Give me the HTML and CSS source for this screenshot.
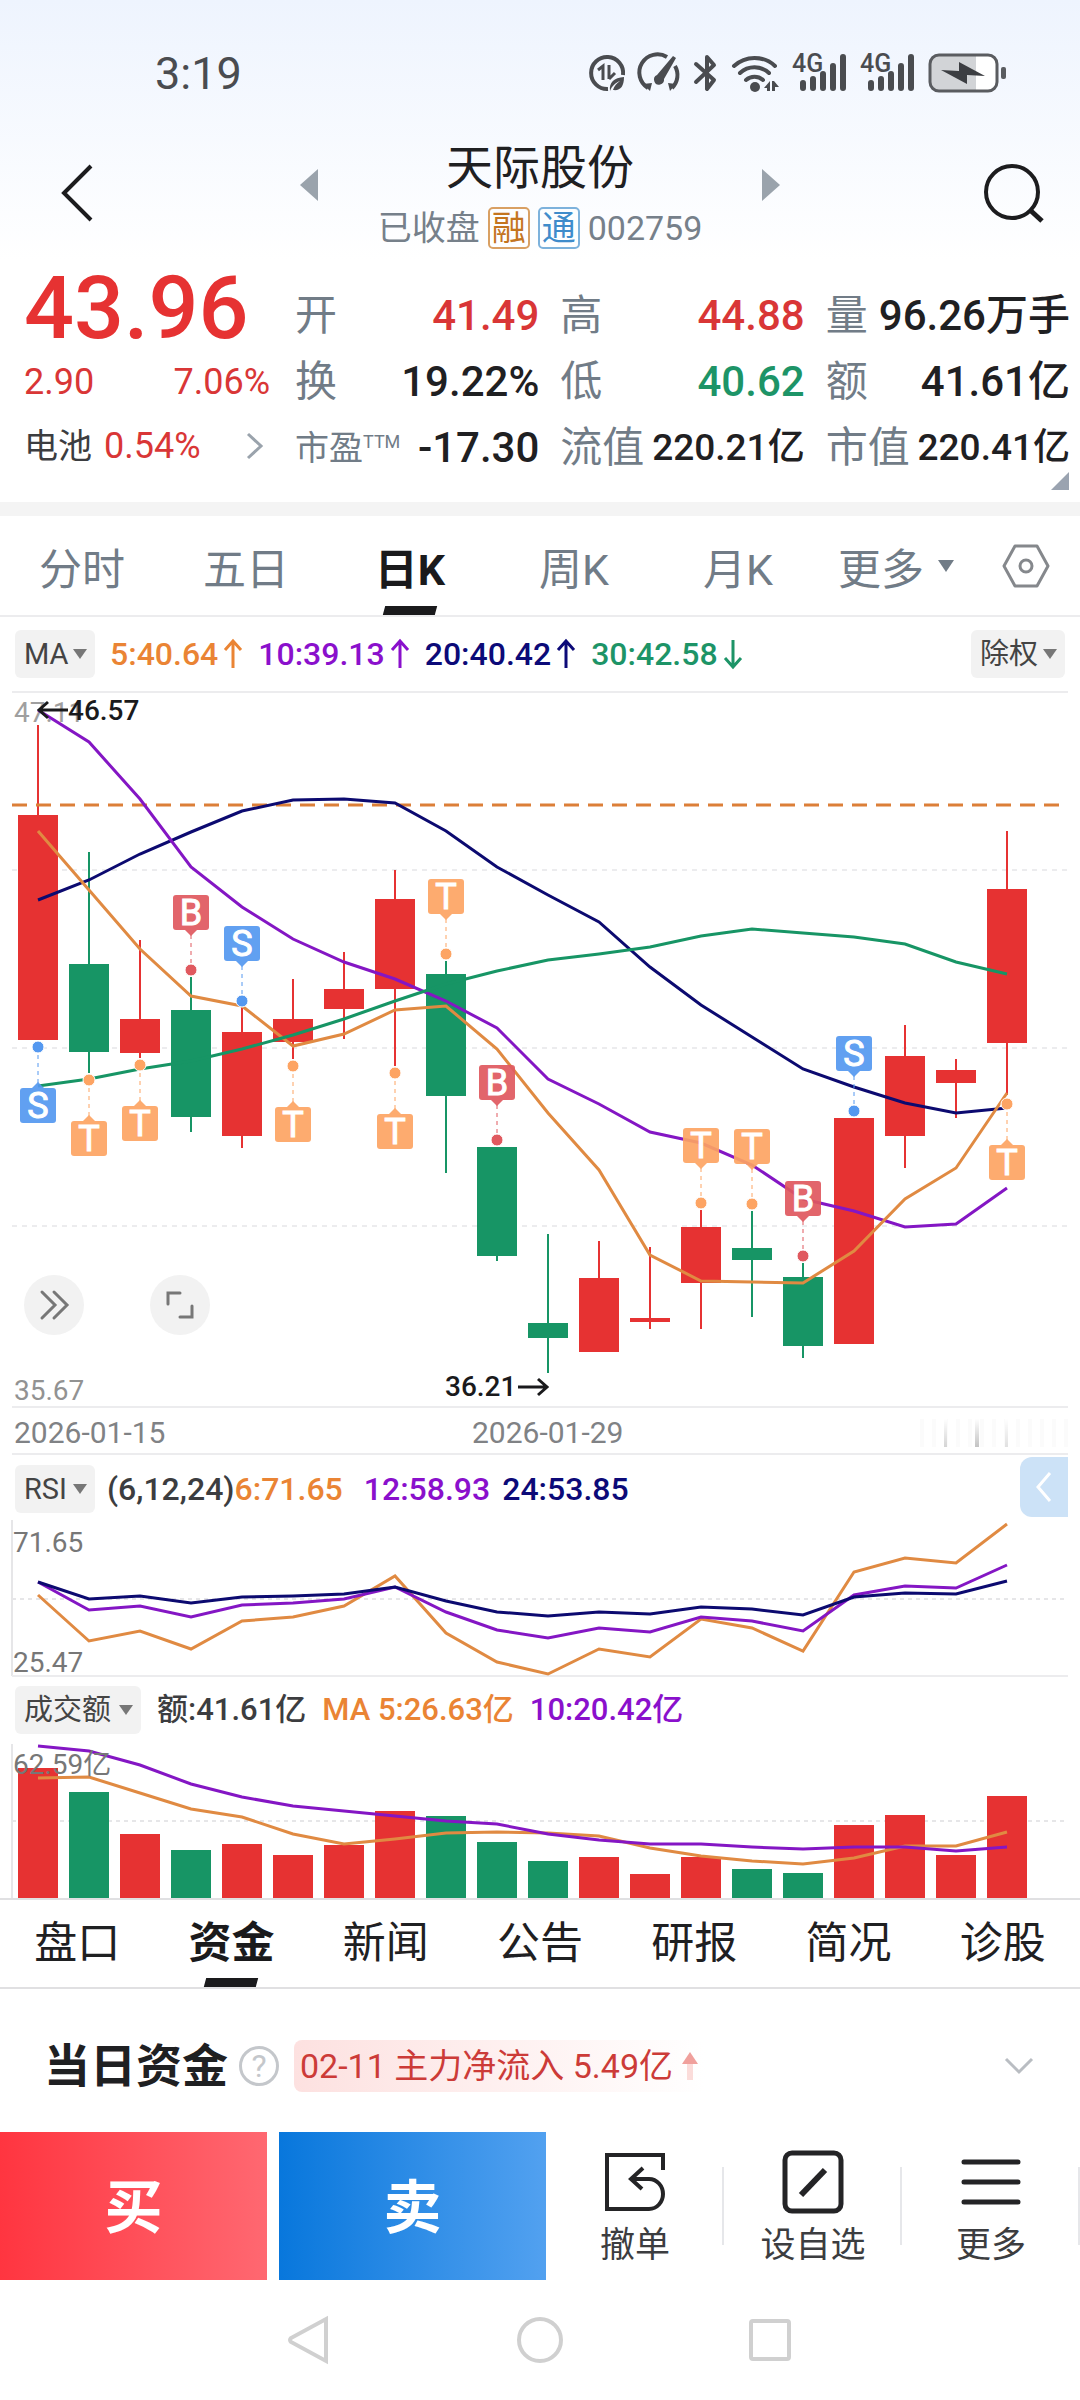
FILE: index.html
```html
<!DOCTYPE html>
<html lang="zh-CN">
<head>
    <meta charset="UTF-8">
    <meta name="viewport" content="width=device-width, initial-scale=1.0">
    <title>天际股份 002759</title>
    <link rel="stylesheet" href="styles.css">
</head>
<body>
    <div class="page">
        <div class="status-bar">
            <span class="clock">3:19</span>
            <div class="status-icons">
                <svg width="38" height="40" viewBox="0 0 38 40">
                    <path d="M35 22A16 16 0 1 0 20 36" fill="none" stroke="#4a4c50" stroke-width="4"/>
                    <path d="M10 17l5-4v14M21 12v14M21 26l6-6" fill="none" stroke="#4a4c50" stroke-width="3"/>
                    <path d="M22 38c-1-9 4-13 14-14 0 10-4 14-11 13 1-4 4-7 7-9-5 2-8 5-10 10z" fill="#4a4c50"/>
                </svg>
                <svg width="42" height="40" viewBox="0 0 42 40">
                    <path d="M9 35A18 18 0 0 1 28 4M36 13A18 18 0 0 1 33 35" fill="none" stroke="#4a4c50" stroke-width="4"/>
                    <path d="M4 31l9-1-2 8zM29 30l8 1-6 7z" fill="#4a4c50"/>
                    <path d="M37 5L25 26a5 5 0 1 1-7-4L34 3z" fill="#4a4c50"/>
                </svg>
                <svg width="24" height="40" viewBox="0 0 24 40">
                    <path d="M2 11l18 16-7 9V4l7 8L2 29" fill="none" stroke="#4a4c50" stroke-width="4" stroke-linejoin="round" stroke-linecap="round"/>
                </svg>
                <svg width="48" height="40" viewBox="0 0 48 40">
                    <path d="M3 13a30 30 0 0 1 41 0M9 20a21 21 0 0 1 29 0M15 27a13 13 0 0 1 17 0" fill="none" stroke="#4a4c50" stroke-width="4" stroke-linecap="round"/>
                    <circle cx="24" cy="34" r="5" fill="#4a4c50"/>
                    <path d="M33 35l6-7v10h-3v-3zM41 28l2 0 5 6h-4v4h-3z" fill="#4a4c50"/>
                </svg>
                <svg class="signal" width="55" height="40" viewBox="0 0 55 40">
                    <text x="0" y="19">4G</text>
                    <path d="M11 30v5M21 26v9M31 21v14M41 13v22M51 4v31" fill="none" stroke="#4a4c50" stroke-width="6" stroke-linecap="round"/>
                </svg>
                <svg class="signal" width="55" height="40" viewBox="0 0 55 40">
                    <text x="0" y="19">4G</text>
                    <path d="M11 30v5M21 26v9M31 21v14M41 13v22M51 4v31" fill="none" stroke="#4a4c50" stroke-width="6" stroke-linecap="round"/>
                </svg>
                <svg width="78" height="40" viewBox="0 0 78 40">
                    <rect x="1" y="1" width="68" height="38" rx="10" fill="#fff"/>
                    <path d="M11 2h37v36H11a9 9 0 0 1-9-9V11a9 9 0 0 1 9-9z" fill="#d2d4d7"/>
                    <rect x="2" y="2" width="67" height="36" rx="9" fill="none" stroke="#5a5c60" stroke-width="3"/>
                    <path d="M13 17l18 1V9l26 14-18-1v9z" fill="#3c3e42"/>
                    <rect x="73" y="14" width="5" height="12" rx="2" fill="#5a5c60"/>
                </svg>
            </div>
        </div>

        <header class="title-bar">
            <button class="icon-button back" aria-label="返回">
                <svg width="34" height="60" viewBox="0 0 34 60"><path d="M31 3L4 30l27 27" fill="none" stroke="#1c1c1e" stroke-width="4"/></svg>
            </button>
            <button class="icon-button prev" aria-label="上一只">
                <svg width="18" height="32" viewBox="0 0 18 32"><path d="M18 0v32L0 16z" fill="#9aa3ac"/></svg>
            </button>
            <div class="stock-name">
                <h1>天际股份</h1>
                <p>已收盘<span class="tag margin">融</span><span class="tag connect">通</span>002759</p>
            </div>
            <button class="icon-button next" aria-label="下一只">
                <svg width="18" height="32" viewBox="0 0 18 32"><path d="M0 0v32l18-16z" fill="#9aa3ac"/></svg>
            </button>
            <button class="icon-button search" aria-label="搜索">
                <svg width="62" height="62" viewBox="0 0 62 62"><circle cx="28" cy="30" r="26" fill="none" stroke="#1c1c1e" stroke-width="4"/><path d="M46 48l12 11" stroke="#1c1c1e" stroke-width="5"/></svg>
            </button>
        </header>

        <section class="quote">
            <div class="quote-main">
                <div class="price">43.96</div>
                <div class="change"><span>2.90</span><span>7.06%</span></div>
                <a class="sector" href="#sector">电池<b>0.54%</b>
                    <svg width="18" height="26" viewBox="0 0 18 26"><path d="M2 1l13 12L2 25" fill="none" stroke="#9aa3ac" stroke-width="3"/></svg>
                </a>
            </div>
            <dl class="stats">
                <div><dt>开</dt><dd class="up">41.49</dd></div>
                <div><dt>高</dt><dd class="up">44.88</dd></div>
                <div><dt>量</dt><dd>96.26万手</dd></div>
                <div><dt>换</dt><dd>19.22%</dd></div>
                <div><dt>低</dt><dd class="down">40.62</dd></div>
                <div><dt>额</dt><dd>41.61亿</dd></div>
                <div><dt class="small">市盈<sup>TTM</sup></dt><dd>-17.30</dd></div>
                <div><dt>流值</dt><dd class="tight">220.21亿</dd></div>
                <div><dt>市值</dt><dd class="tight">220.41亿</dd></div>
            </dl>
        </section>

        <nav class="period-tabs">
            <button>分时</button>
            <button>五日</button>
            <button class="active">日K</button>
            <button>周K</button>
            <button>月K</button>
            <button class="more">更多</button>
            <button aria-label="设置">
                <svg width="48" height="44" viewBox="0 0 48 44"><path d="M13 2h22l11 20-11 20H13L2 22z" fill="none" stroke="#85888c" stroke-width="3" stroke-linejoin="round"/><circle cx="24" cy="22" r="6" fill="none" stroke="#85888c" stroke-width="3"/></svg>
            </button>
        </nav>

        <div class="indicator-row ma-row">
            <span class="pill"><select class="w-ma" aria-label="主图指标"><option>MA</option></select></span>
            <span class="c-orange">5:40.64<svg class="arrow" viewBox="0 0 20 30"><path d="M10 29V2M2 11l8-9 8 9"/></svg></span>
            <span class="c-purple">10:39.13<svg class="arrow" viewBox="0 0 20 30"><path d="M10 29V2M2 11l8-9 8 9"/></svg></span>
            <span class="c-navy">20:40.42<svg class="arrow" viewBox="0 0 20 30"><path d="M10 29V2M2 11l8-9 8 9"/></svg></span>
            <span class="c-green">30:42.58<svg class="arrow" viewBox="0 0 20 30"><path d="M10 1v27M2 19l8 9 8-9"/></svg></span>
            <span class="pill right"><select class="w-adjust" aria-label="复权方式"><option>除权</option></select></span>
        </div>

        <div class="chart-box">
            <svg id="kline" class="chart" viewBox="0 0 1080 718"></svg>
            <div class="chart-tools">
                <button aria-label="快进"><svg width="30" height="32" viewBox="0 0 30 32"><path d="M3 3l13 13L3 29M15 3l13 13-13 13"/></svg></button>
                <button aria-label="全屏"><svg width="30" height="32" viewBox="0 0 30 32"><path d="M3 15V4h12M27 17v11H15"/></svg></button>
            </div>
        </div>
        <div class="date-row">
            <span>2026-01-15</span>
            <span>2026-01-29</span>
            <i class="blur-date"></i>
        </div>

        <div class="indicator-row rsi-row">
            <span class="pill"><select class="w-ma" aria-label="副图指标一"><option>RSI</option></select></span>
            <span class="c-text">(6,12,24)<em class="c-orange">6:71.65</em></span>
            <span class="c-purple rsi-12">12:58.93</span>
            <span class="c-navy">24:53.85</span>
            <button class="side-tab" aria-label="展开侧栏"><svg width="18" height="32" viewBox="0 0 18 32"><path d="M15 2L3 16l12 14" fill="none" stroke="#fff" stroke-width="3"/></svg></button>
        </div>
        <svg id="rsi" class="chart" viewBox="0 0 1080 161"></svg>

        <div class="indicator-row volume-row">
            <span class="pill"><select class="w-volume" aria-label="副图指标二"><option>成交额</option></select></span>
            <span class="c-text">额:41.61亿</span>
            <span class="c-orange">MA 5:26.63亿</span>
            <span class="c-purple">10:20.42亿</span>
        </div>
        <svg id="volume" class="chart" viewBox="0 0 1080 160"></svg>

        <nav class="info-tabs">
            <button>盘口</button>
            <button class="active">资金</button>
            <button>新闻</button>
            <button>公告</button>
            <button>研报</button>
            <button>简况</button>
            <button>诊股</button>
        </nav>

        <section class="fund">
            <h2>当日资金</h2>
            <button class="help" aria-label="说明">?</button>
            <p class="fund-note">02-11 主力净流入 5.49亿
                <svg width="18" height="30" viewBox="0 0 18 30"><path d="M9 1l8 12H1z" fill="#f0a09c"/><path d="M6 13h6v16H6z" fill="#fbdcda"/></svg>
            </p>
            <button class="icon-button fold" aria-label="展开">
                <svg width="30" height="18" viewBox="0 0 30 18"><path d="M2 2l13 13L28 2" fill="none" stroke="#b9bdc2" stroke-width="3"/></svg>
            </button>
        </section>

        <footer class="trade-bar">
            <button class="buy">买</button>
            <button class="sell">卖</button>
            <button class="action">
                <svg width="64" height="64" viewBox="0 0 64 64" fill="none" stroke="#242426" stroke-width="4">
                    <path d="M60 20V5H4v54h42c8 0 14-7 14-15s-6-15-14-15H30"/><path d="M40 18L28 29l11 10"/>
                </svg>
                撤单
            </button>
            <button class="action">
                <svg width="64" height="64" viewBox="0 0 64 64" fill="none" stroke="#242426">
                    <rect x="4" y="3" width="56" height="58" rx="7" stroke-width="5"/><path d="M20 45l24-25" stroke-width="6"/>
                </svg>
                设自选
            </button>
            <button class="action">
                <svg width="64" height="64" viewBox="0 0 64 64" stroke="#242426" stroke-width="5" stroke-linecap="round">
                    <path d="M5 12h54M5 32h54M5 52h54"/>
                </svg>
                更多
            </button>
        </footer>

        <div class="system-nav">
            <button class="icon-button" aria-label="系统返回"><svg width="48" height="48" viewBox="0 0 48 48"><path d="M40 3v42L5 26q-2-2 0-4z"/></svg></button>
            <button class="icon-button" aria-label="主屏幕"><svg width="48" height="48" viewBox="0 0 48 48"><circle cx="24" cy="24" r="21"/></svg></button>
            <button class="icon-button" aria-label="最近任务"><svg width="48" height="48" viewBox="0 0 48 48"><rect x="5" y="5" width="38" height="38" rx="2"/></svg></button>
        </div>
    </div>

    <script src="charts.js"></script>
</body>
</html>
```

FILE: styles.css
```css
* {
    box-sizing: border-box;
}

body {
    margin: 0;
    background: #fff;
    color: #1f2022;
    font-family: Roboto, "Noto Sans CJK SC", sans-serif;
}

button, select {
    font-family: inherit;
    color: inherit;
    background: none;
    border: none;
    padding: 0;
    margin: 0;
}

h1, h2, p, dl, dd {
    margin: 0;
}

svg {
    display: block;
    flex: none;
    overflow: visible;
}

.page {
    background: linear-gradient(#eef4fe, #fff 260px);
}

/* Status bar */
.status-bar {
    display: flex;
    justify-content: space-between;
    align-items: center;
    height: 130px;
    padding: 16px 74px 0 155px;
}

.clock {
    font-size: 45px;
    color: #4a4c50;
}

.status-icons {
    display: flex;
    gap: 13px;
}

.signal text {
    font-size: 25px;
    font-weight: 500;
    fill: #4a4c50;
}

/* Title */
.title-bar {
    display: grid;
    grid-template-columns: 1fr 18px 444px 18px 1fr;
    align-items: center;
    height: 138px;
    padding: 0 34px 12px;
}

.icon-button {
    display: flex;
    align-items: center;
    justify-content: center;
}

.prev, .next {
    padding-bottom: 16px;
}

.back {
    justify-content: flex-start;
    padding-left: 26px;
}

.search {
    justify-content: flex-end;
}

.stock-name {
    padding-top: 6px;
    text-align: center;
}

.stock-name h1 {
    font-size: 47px;
    line-height: 64px;
    font-weight: 400;
}

.stock-name p {
    display: flex;
    align-items: center;
    justify-content: center;
    gap: 8px;
    font-size: 34px;
    line-height: 56px;
    color: #76808a;
}

.tag {
    border: 2px solid;
    border-radius: 5px;
    font-size: 34px;
    line-height: 38px;
    padding: 0 2px;
}

.tag.margin {
    color: #c4751f;
    border-color: #d9a063;
}

.tag.connect {
    color: #3f8ccb;
    border-color: #7db2dc;
}

/* Quote */
.quote {
    position: relative;
    display: grid;
    grid-template-columns: 246fr 775fr;
    gap: 25px;
    padding: 0 10px 21px 24px;
    border-bottom: 14px solid #f4f4f4;
}

.quote::after {
    content: "";
    position: absolute;
    right: 11px;
    bottom: 12px;
    border-left: 18px solid transparent;
    border-bottom: 18px solid #9aa3b0;
}

.price {
    font-size: 88px;
    font-weight: 500;
    line-height: 80px;
    color: #e63232;
}

.change {
    display: flex;
    justify-content: space-between;
    font-size: 36px;
    line-height: 68px;
    color: #d93636;
}

.sector {
    display: flex;
    align-items: center;
    gap: 12px;
    font-size: 34px;
    line-height: 60px;
    color: #3c3d40;
    text-decoration: none;
}

.sector b {
    font-size: 36px;
    font-weight: 400;
    color: #d93636;
    flex: 1;
}

.sector svg {
    margin-right: 6px;
}

.stats {
    display: grid;
    grid-template-columns: repeat(3, 1fr);
    column-gap: 21px;
    padding-top: 15px;
}

.stats div {
    display: flex;
    justify-content: space-between;
    white-space: nowrap;
}

.stats dt, .stats dd {
    font-size: 42px;
    line-height: 66px;
}

.stats dt.small {
    font-size: 34px;
}

.stats dt {
    color: #717c87;
}

.stats sup {
    font-size: 18px;
    line-height: 18px;
}

.stats dd {
    font-weight: 500;
}

.stats dd.tight {
    font-size: 37px;
}

.stats .up {
    color: #d93636;
}

.stats .down {
    color: #1d9467;
}

/* Period tabs */
.period-tabs {
    display: grid;
    grid-template-columns: repeat(5, 164fr) 152fr 108fr;
    height: 101px;
    border-bottom: 2px solid #ececee;
}

.period-tabs button, .info-tabs button {
    position: relative;
    display: flex;
    align-items: center;
    justify-content: center;
    font-size: 43px;
}

.period-tabs button {
    color: #717c87;
}

.period-tabs .active, .info-tabs .active {
    color: #1a1a1c;
    font-weight: 700;
}

.period-tabs .active::after, .info-tabs .active::after {
    content: "";
    position: absolute;
    bottom: 0;
    left: 50%;
    width: 52px;
    height: 9px;
    background: #1a1a1c;
    transform: translateX(-50%) skewX(-15deg);
}

.more::after {
    content: "";
    margin-left: 14px;
    border: 8px solid transparent;
    border-top: 12px solid #717c87;
    border-bottom: 0;
}

/* Indicator rows */
.indicator-row {
    position: relative;
    display: flex;
    align-items: center;
    padding: 0 15px;
    gap: 15px;
    font-size: 32px;
    font-weight: 500;
    white-space: nowrap;
}

.ma-row {
    height: 73px;
}

.rsi-row {
    height: 61px;
    padding-top: 6px;
    gap: 12px;
}

.volume-row {
    height: 63px;
    padding-top: 3px;
    gap: 16px;
    font-size: 31px;
    line-height: 40px;
}

.indicator-row > span:not(.pill) {
    display: flex;
    align-items: center;
}

.indicator-row em {
    font-style: normal;
}

.pill {
    position: relative;
}

.pill.right {
    margin-left: auto;
}

.pill select {
    display: block;
    appearance: none;
    height: 48px;
    padding-left: 9px;
    border-radius: 6px;
    background: #f2f2f2;
    color: #444;
    font-size: 29px;
}

.w-ma {
    width: 80px;
}

.w-adjust {
    width: 94px;
}

.w-volume {
    width: 126px;
}

.pill::after {
    content: "";
    position: absolute;
    right: 8px;
    top: 19px;
    border: 7px solid transparent;
    border-top: 10px solid #777;
    border-bottom: 0;
}

.arrow {
    width: 20px;
    height: 30px;
    margin-left: 5px;
    fill: none;
    stroke: currentColor;
    stroke-width: 3px;
}

.c-orange { color: #ea8434; }
.c-purple { color: #8a10cc; }
.c-navy { color: #0c0a78; }
.c-green { color: #1d9467; }
.c-text { color: #3c3d40; }

.rsi-12 {
    margin-left: 9px;
}

.side-tab {
    position: absolute;
    right: 12px;
    top: 2px;
    width: 48px;
    height: 60px;
    padding-left: 15px;
    border-radius: 12px 0 0 12px;
    background: #cce2f7;
}

/* Charts */
.chart {
    width: 100%;
    height: auto;
}

.chart text {
    font-size: 28px;
    fill: #777;
}

.chart .extreme {
    font-weight: 500;
    fill: #1a1a1c;
}

.chart .marker {
    font-size: 36px;
    fill: #fff;
    stroke: #fff;
    text-anchor: middle;
}

.chart-box {
    position: relative;
}

.chart-tools {
    position: absolute;
    left: 24px;
    bottom: 73px;
    display: flex;
    gap: 66px;
}

.chart-tools button {
    display: flex;
    align-items: center;
    justify-content: center;
    width: 60px;
    height: 60px;
    border-radius: 50%;
    background: #f2f2f2;
}

.chart-tools svg {
    fill: none;
    stroke: #777;
    stroke-width: 3px;
    stroke-linecap: round;
}

.date-row {
    display: grid;
    grid-template-columns: 458fr 448fr 148fr;
    align-items: center;
    height: 47px;
    margin: 0 12px;
    padding: 4px 0 0 2px;
    border-bottom: 2px solid #ececee;
    font-size: 30px;
    color: #808285;
}

.blur-date {
    height: 28px;
    opacity: 0.35;
    background:
        linear-gradient(#fff, #888) 24px 0 / 3px 100% no-repeat,
        linear-gradient(#fff, #555) 55px 0 / 4px 100% no-repeat,
        linear-gradient(#fff, #aaa) 85px 0 / 3px 100% no-repeat,
        repeating-linear-gradient(90deg, #f6f6f6 0 4px, #fff 4px 12px);
}

/* Info tabs */
.info-tabs {
    display: grid;
    grid-template-columns: repeat(7, 1fr);
    height: 89px;
    border-bottom: 2px solid #e0e0e2;
}

.info-tabs button {
    padding-bottom: 10px;
}

/* Fund */
.fund {
    display: flex;
    align-items: center;
    height: 143px;
    padding: 10px 46px 0 44px;
}

.fund h2 {
    font-size: 46px;
    line-height: 60px;
}

.help {
    width: 40px;
    height: 40px;
    margin: 0 15px 0 11px;
    border: 3px solid #c4c7cb;
    border-radius: 50%;
    font-size: 32px;
    line-height: 34px;
    color: #c4c7cb;
}

.fund-note {
    display: flex;
    align-items: center;
    gap: 8px;
    padding: 0 6px;
    border-radius: 8px;
    background: linear-gradient(90deg, #fde1e0, #fff);
    font-size: 34px;
    line-height: 52px;
    color: #cc3b38;
}

.fold {
    margin-left: auto;
}

/* Trade bar */
.trade-bar {
    display: grid;
    grid-template-columns: 273fr 273fr 178fr 178fr 178fr;
    height: 148px;
}

.buy, .sell {
    padding-bottom: 6px;
    font-size: 58px;
    font-weight: 700;
    color: #fff;
}

.buy {
    background: linear-gradient(90deg, #ff3540, #ff6871);
    margin-right: 6px;
}

.sell {
    background: linear-gradient(90deg, #0877dc, #52a1f0);
    margin-left: 6px;
}

.action {
    position: relative;
    display: flex;
    flex-direction: column;
    align-items: center;
    padding-top: 18px;
    font-size: 35px;
    line-height: 64px;
    color: #3c3d40;
}

.action::after {
    content: "";
    position: absolute;
    right: 0;
    top: 35px;
    width: 2px;
    height: 78px;
    background: #e6e7ea;
}

/* System navigation */
.system-nav {
    display: flex;
    justify-content: center;
    gap: 182px;
    height: 120px;
}

.system-nav svg {
    fill: none;
    stroke: #d0d0d0;
    stroke-width: 4px;
}
```

FILE: charts.js
```js
const RED = '#e63232';
const GREEN = '#179565';
const ORANGE = '#e08a42';
const PURPLE = '#8416c4';
const NAVY = '#0c0a70';
const STEP = 51;
const FIRST = 38;

const xOf = i => FIRST + i * STEP;

// rise, body top, body bottom, high, low
const candles = [
    [1, 125, 350, 35, 350], [0, 274, 362, 162, 383], [1, 329, 363, 250, 368],
    [0, 320, 427, 287, 442], [1, 342, 446, 317, 458], [1, 329, 352, 289, 369],
    [1, 299, 319, 262, 349], [1, 209, 299, 180, 376], [0, 284, 406, 271, 483],
    [0, 457, 566, 457, 571], [0, 633, 648, 544, 683], [1, 588, 662, 551, 662],
    [1, 628, 632, 557, 639], [1, 537, 593, 520, 639], [0, 558, 570, 521, 627],
    [0, 587, 656, 573, 668], [1, 428, 654, 428, 654], [1, 366, 446, 335, 478],
    [1, 380, 393, 369, 428], [1, 199, 353, 141, 405]
];

const ma = {
    [NAVY]: [210, 190, 164, 142, 121, 110, 109, 113, 141, 177, 205, 232, 277, 315, 347, 379, 397, 413, 423, 418],
    [PURPLE]: [20, 52, 109, 177, 217, 249, 272, 289, 311, 338, 389, 414, 442, 453, 475, 509, 521, 537, 534, 498],
    [ORANGE]: [141, 200, 259, 306, 316, 356, 344, 320, 316, 359, 423, 480, 565, 591, 592, 593, 561, 509, 478, 403],
    [GREEN]: [396, 389, 379, 371, 359, 345, 329, 311, 294, 281, 270, 264, 257, 246, 239, 243, 247, 254, 272, 284]
};

// index, letter, dot y, label is above the dot
const markers = [
    [0, 'S', 357, 0], [1, 'T', 390, 0], [2, 'T', 375, 0], [3, 'B', 280, 1],
    [4, 'S', 311, 1], [5, 'T', 376, 0], [7, 'T', 383, 0], [8, 'T', 264, 1],
    [9, 'B', 450, 1], [13, 'T', 513, 1], [14, 'T', 514, 1], [15, 'B', 566, 1],
    [16, 'S', 421, 1], [19, 'T', 414, 0]
];
const markerColors = { S: '#5498f0', T: '#fda463', B: '#e0595f' };

const rsi = {
    [ORANGE]: [79, 125, 115, 133, 105, 101, 90, 60, 117, 146, 158, 133, 141, 103, 112, 135, 56, 42, 47, 8],
    [PURPLE]: [66, 94, 90, 101, 89, 87, 83, 71, 96, 114, 122, 112, 116, 101, 105, 115, 79, 70, 72, 49],
    [NAVY]: [66, 83, 80, 87, 81, 80, 78, 71, 85, 96, 100, 96, 98, 91, 93, 99, 81, 77, 78, 65]
};

const volumeTops = [28, 52, 94, 110, 104, 115, 105, 71, 76, 102, 121, 117, 134, 117, 129, 133, 85, 75, 115, 56];
const volumeMa = {
    [ORANGE]: [38, 37, 53, 69, 77, 94, 104, 99, 93, 92, 93, 96, 108, 116, 121, 124, 118, 106, 106, 92],
    [PURPLE]: [6, 11, 25, 44, 57, 66, 71, 76, 81, 84, 94, 100, 104, 104, 107, 109, 107, 107, 111, 107]
};

function line(x1, y1, x2, y2, color, width, dash) {
    return `<path d="M${x1} ${y1}L${x2} ${y2}" stroke="${color}" stroke-width="${width}" stroke-dasharray="${dash || 'none'}"/>`;
}

function rect(x, y, w, h, color) {
    return `<rect x="${x}" y="${y}" width="${w}" height="${h}" fill="${color}"/>`;
}

function curves(set) {
    return Object.entries(set).map(([color, ys]) => {
        const points = ys.map((y, i) => `${xOf(i)},${y}`).join(' ');
        return `<polyline points="${points}" fill="none" stroke="${color}" stroke-width="3"/>`;
    }).join('');
}

function marker([i, letter, dot, above]) {
    const x = xOf(i);
    const color = markerColors[letter];
    const top = above ? dot - 75 : dot + 41;
    const tip = above
        ? `M${x - 6} ${top + 35}h12l-6 6z`
        : `M${x - 6} ${top}h12l-6-6z`;
    const from = above ? top + 40 : dot + 8;
    const to = above ? dot - 6 : top - 5;
    return line(x, from, x, to, color, 1, '4 4') +
        `<circle cx="${x}" cy="${dot}" r="6" fill="${color}" stroke="#fff" stroke-width="1"/>` +
        `<g opacity="0.92"><rect x="${x - 18}" y="${top}" width="36" height="35" rx="3" fill="${color}"/><path d="${tip}" fill="${color}"/></g>` +
        `<text class="marker" x="${x}" y="${top + 30}">${letter}</text>`;
}

function drawKline() {
    let out = line(12, 2, 1068, 2, '#ececee', 2);
    [180, 358, 536].forEach(y => out += line(12, y, 1068, y, '#ececee', 2, '5 5'));
    out += line(12, 717, 1068, 717, '#ececee', 2);
    out += `<text x="14" y="32" opacity="0.7">47.11</text><text x="14" y="710" opacity="0.8">35.67</text>`;
    candles.forEach(([up, top, bottom, high, low], i) => {
        const color = up ? RED : GREEN;
        out += line(xOf(i), high, xOf(i), low, color, 2);
        out += rect(xOf(i) - 20, top, 40, bottom - top, color);
    });
    out += line(12, 115, 1062, 115, '#dc7f38', 3, '15 9');
    out += curves(ma);
    out += `<path d="M68 20H40M48 12l-9 8 9 8M518 697h28M538 689l9 8-9 8" fill="none" stroke="#1a1a1c" stroke-width="3"/>`;
    out += `<text class="extreme" x="68" y="30">46.57</text><text class="extreme" x="445" y="706">36.21</text>`;
    out += markers.map(marker).join('');
    document.getElementById('kline').innerHTML = out;
}

function drawRsi() {
    let out = line(12, 4, 12, 160, '#e6e6e8', 2) + line(12, 160, 1068, 160, '#ececee', 2);
    out += line(12, 83, 1068, 83, '#e6e6e8', 2, '4 4');
    out += `<text x="13" y="36">71.65</text><text x="13" y="156">25.47</text>`;
    out += curves(rsi);
    document.getElementById('rsi').innerHTML = out;
}

function drawVolume() {
    let out = line(12, 4, 12, 158, '#e6e6e8', 2) + line(12, 81, 1068, 81, '#e6e6e8', 2, '4 4');
    volumeTops.forEach((top, i) => {
        out += rect(xOf(i) - 20, top, 40, 158 - top, candles[i][0] ? RED : GREEN);
    });
    out += line(0, 159, 1080, 159, '#e0e0e2', 2);
    out += curves(volumeMa);
    out += `<text x="13" y="34">62.59亿</text>`;
    document.getElementById('volume').innerHTML = out;
}

drawKline();
drawRsi();
drawVolume();
```
